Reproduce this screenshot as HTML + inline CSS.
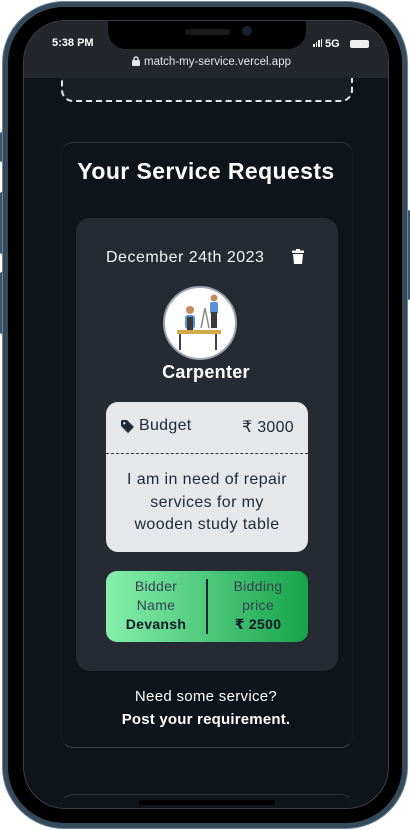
<!DOCTYPE html>
<html><head><meta charset="utf-8">
<style>
*{margin:0;padding:0;box-sizing:border-box}
body{width:410px;height:830px;background:#fff;position:relative;overflow:hidden;font-family:"Liberation Sans","DejaVu Sans",sans-serif}
.abs{position:absolute}
.frame{left:2px;top:1px;width:406px;height:828px;border-radius:62px;background:#34495a;border:1px solid #6d8396}
.bezel{left:8px;top:7px;width:394px;height:816px;border-radius:56px;background:#000}
.screen{left:23px;top:20px;width:366px;height:789px;border-radius:42px;background:#0f131a;overflow:hidden;border:1px solid #3a3f46}
.btn{left:0;width:4px;background:#3d5466;border-radius:2px}
.c{color:#fff;text-align:center;width:100%}
</style></head><body>
<div class="abs btn" style="top:132px;height:30px"></div>
<div class="abs btn" style="top:192px;height:62px"></div>
<div class="abs btn" style="top:272px;height:62px"></div>
<div class="abs btn" style="left:406px;top:210px;height:90px"></div>
<div class="abs frame"></div>
<div class="abs bezel"></div>
<div class="abs screen">
  <div class="abs" style="left:37px;top:20px;width:292px;height:61px;border:2px dashed #e5e7eb;border-radius:12px;background:#1b1f26"></div>
  <div class="abs" style="left:0;top:0;width:366px;height:57px;background:#23272b"></div>
  <div class="abs" style="left:84px;top:-2px;width:198px;height:30px;background:#000;border-radius:0 0 18px 18px"></div>
  <div class="abs" style="left:161px;top:8px;width:45px;height:6px;background:#1a1a1a;border-radius:3px"></div>
  <div class="abs" style="left:218px;top:5px;width:10px;height:10px;background:#1a2030;border-radius:50%"></div>
  <div class="abs" style="left:28px;top:16px;font-size:11px;font-weight:bold;color:#fff">5:38 PM</div>
  <div class="abs" style="left:289px;top:17px;font-size:11px;font-weight:bold;color:#fff">
    <span style="display:inline-block;width:1.5px;height:3px;background:#fff;margin-right:1px"></span><span style="display:inline-block;width:1.5px;height:5px;background:#fff;margin-right:1px"></span><span style="display:inline-block;width:1.5px;height:7px;background:#fff;margin-right:1px"></span><span style="display:inline-block;width:1.5px;height:8px;background:#fff;margin-right:3px"></span>5G</div>
  <div class="abs" style="left:326px;top:19px;width:19px;height:8px;background:#eee;border-radius:2px"></div>
  <div class="abs" style="left:108px;top:35px;font-size:11.5px;color:#e5e7eb">
    <svg width="8" height="10" viewBox="0 0 8 10" style="vertical-align:-1px;margin-right:4px"><rect x="0" y="4" width="8" height="6" rx="1" fill="#e5e7eb"/><path d="M2 4V3a2 2 0 0 1 4 0v1" stroke="#e5e7eb" stroke-width="1.4" fill="none"/></svg>match-my-service.vercel.app</div>

  <div class="abs" style="left:37px;top:121px;width:292px;height:606px;border-top:1px solid #2c3038;border-bottom:1px solid #3a3e45;border-left:1px solid #161a20;border-right:1px solid #161a20;border-radius:12px"></div>
  <div class="abs" style="left:37px;top:773px;width:292px;height:60px;border-top:1px solid #2c3038;border-left:1px solid #161a20;border-right:1px solid #161a20;border-radius:12px"></div>
  <div class="abs c" style="left:0;top:137px;font-size:23px;font-weight:bold;letter-spacing:0.4px">Your Service Requests</div>

  <div class="abs" style="left:52px;top:197px;width:262px;height:453px;background:#262b33;border-radius:14px"></div>
  <div class="abs" style="left:82px;top:228px;font-size:16px;letter-spacing:0.5px;color:#f3f4f6">December 24th 2023</div>
  <svg class="abs" style="left:268px;top:228px" width="12" height="15" viewBox="0 0 12 15"><rect x="0" y="1.5" width="12" height="2.5" rx="0.5" fill="#fff"/><rect x="4" y="0" width="4" height="2" fill="#fff"/><path d="M1 5h10l-1 10H2z" fill="#fff"/></svg>
  <div class="abs" style="left:139px;top:265px;width:74px;height:74px;border-radius:50%;background:#fff;border:2px solid #9ca3af;overflow:hidden">
    <svg width="70" height="70" viewBox="0 0 70 70">
      <rect x="12" y="42" width="44" height="4" fill="#d4a94a"/>
      <rect x="14" y="46" width="2" height="16" fill="#444"/><rect x="50" y="46" width="2" height="16" fill="#444"/>
      <circle cx="25" cy="22" r="4" fill="#c58b5c"/><rect x="20" y="27" width="10" height="14" rx="3" fill="#5b92d6"/><rect x="22" y="29" width="6" height="13" fill="#3a3a3a"/>
      <circle cx="49" cy="10" r="3.5" fill="#c58b5c"/><rect x="45" y="14" width="8" height="12" rx="2" fill="#5b92d6"/><rect x="46" y="24" width="6" height="16" fill="#3a3a3a"/>
      <path d="M36 40l4-20 4 20" stroke="#888" stroke-width="1.5" fill="none"/>
    </svg>
  </div>
  <div class="abs c" style="left:0;top:341px;font-size:18px;font-weight:bold;letter-spacing:0.3px">Carpenter</div>

  <div class="abs" style="left:82px;top:381px;width:202px;height:150px;background:#e5e7eb;border-radius:12px;overflow:hidden">
    <div style="height:52px;border-bottom:1px dashed #333;position:relative;font-size:16px;letter-spacing:0.3px;color:#1f2937">
      <svg class="abs" style="left:15px;top:18px" width="13" height="13" viewBox="0 0 13 13"><path d="M0 1.5V6l7 7 6-6-7-7H1.5A1.5 1.5 0 0 0 0 1.5z" fill="#1f2937"/><circle cx="3.3" cy="3.3" r="1.2" fill="#e5e7eb"/></svg>
      <span class="abs" style="left:33px;top:15px">Budget</span>
      <span class="abs" style="right:14px;top:15px">₹ 3000</span>
    </div>
    <div style="text-align:center;font-size:16px;letter-spacing:0.4px;line-height:22.5px;color:#1f2937;padding-top:15px">I am in need of repair<br>services for my<br>wooden study table</div>
  </div>

  <div class="abs" style="left:82px;top:550px;width:202px;height:71px;border-radius:11px;background:linear-gradient(90deg,#86efac,#16a34a)">
    <div class="abs" style="left:100px;top:8px;width:2px;height:55px;background:#1f2937"></div>
    <div class="abs" style="left:0;top:6px;width:100px;text-align:center;font-size:14px;letter-spacing:0.3px;line-height:19px;color:#374151">Bidder<br>Name<br><b style="color:#111827">Devansh</b></div>
    <div class="abs" style="left:102px;top:6px;width:100px;text-align:center;font-size:14px;letter-spacing:0.3px;line-height:19px;color:#374151">Bidding<br>price<br><b style="color:#111827">₹ 2500</b></div>
  </div>

  <div class="abs c" style="left:0;top:667px;font-size:15px;letter-spacing:0.3px">Need some service?</div>
  <div class="abs c" style="left:0;top:690px;font-size:15px;font-weight:bold;letter-spacing:0.2px">Post your requirement.</div>
  <div class="abs" style="left:115px;top:779px;width:136px;height:5px;background:#000;border-radius:3px"></div>
</div>
</body></html>
